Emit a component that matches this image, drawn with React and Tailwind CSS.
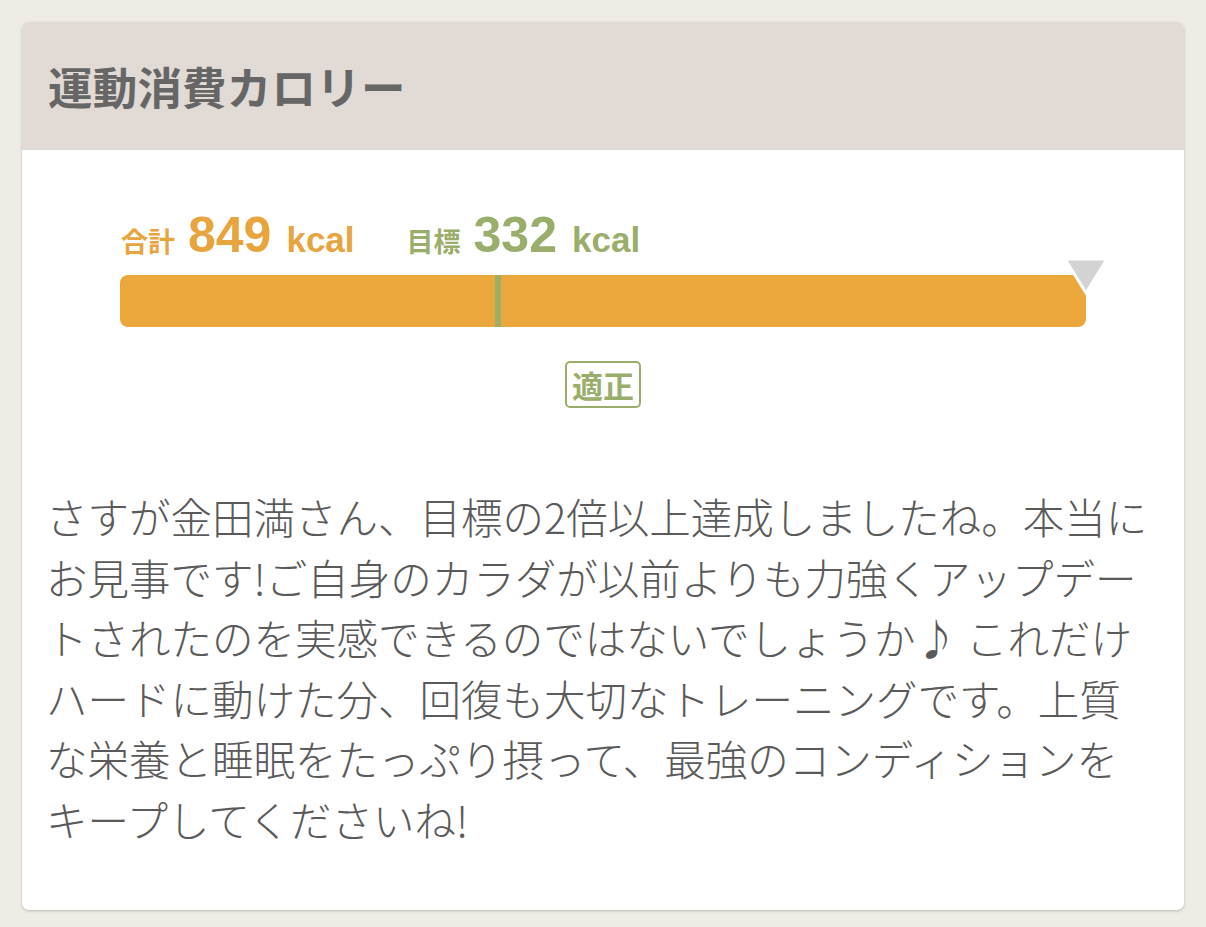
import React from "react";

const jp = { fontFamily: '"Noto Sans CJK JP", "Noto Sans", sans-serif' };
const num = { fontFamily: '"Liberation Sans", "Noto Sans CJK JP", sans-serif' };

const lines = [
  "さすが金田満さん、目標の2倍以上達成しましたね。本当に",
  "お見事です!ご自身のカラダが以前よりも力強くアップデー",
  "トされたのを実感できるのではないでしょうか♪ これだけ",
  "ハードに動けた分、回復も大切なトレーニングです。上質",
  "な栄養と睡眠をたっぷり摂って、最強のコンディションを",
  "キープしてくださいね!",
];

function CalorieBar({ total, goal }) {
  const pct = (goal / total) * 100;
  return (
    <div className="relative h-[52px] w-full rounded-[8px] bg-[#eaa73b]">
      <div
        className="absolute top-0 h-full w-[6px] bg-[#9caf6a]"
        style={{ left: `calc(${pct}% - 3px)` }}
      />
      {/* end-of-range marker */}
      <svg
        className="absolute right-[-24px] top-[-18px]"
        width="48"
        height="40"
        viewBox="0 0 48 40"
      >
        <polygon
          points="3,2 45,2 24,36"
          fill="#d3d3d3"
          stroke="#ffffff"
          strokeWidth="3"
          strokeLinejoin="miter"
        />
      </svg>
    </div>
  );
}

export default function App() {
  return (
    <div className="min-h-[927px] w-full bg-[#efece6] p-[22px]" style={jp}>
      <div className="w-[1162px] overflow-hidden rounded-[7px] bg-white shadow-[0_1px_3px_rgba(0,0,0,0.22)]">
        <div className="flex h-[128px] items-center bg-[#e1dad5] pl-[26px]">
          <h1 className="text-[44.5px] font-bold leading-none tracking-[0.2px] text-[#666666]">
            運動消費カロリー
          </h1>
        </div>

        <div className="px-[98px] pt-[60px]">
          <div className="flex items-baseline pl-[1px] font-bold leading-none">
            <span className="text-[27px] text-[#e8a43d]">合計</span>
            <span className="ml-[13px] text-[50px] text-[#e8a43d]" style={num}>
              849
            </span>
            <span className="ml-[15px] text-[35px] text-[#e8a43d]" style={num}>
              kcal
            </span>
            <span className="ml-[52px] text-[27px] text-[#9aae6c]">目標</span>
            <span className="ml-[13px] text-[50px] text-[#9aae6c]" style={num}>
              332
            </span>
            <span className="ml-[15px] text-[35px] text-[#9aae6c]" style={num}>
              kcal
            </span>
          </div>

          <div className="mt-[15px]">
            <CalorieBar total={849} goal={332} />
          </div>

          <div className="mt-[34px] flex justify-center">
            <span className="rounded-[5px] border-2 border-[#9aae6c] px-[5px] py-[4px] text-[31px] font-bold leading-[35px] text-[#9aae6c]">
              適正
            </span>
          </div>
        </div>

        <div className="px-[24px] pb-[61px] pt-[78px] text-[41.5px] font-light leading-[60.5px] text-[#5a5a5a]">
          {lines.map((l) => (
            <div key={l} className="whitespace-nowrap">
              {l}
            </div>
          ))}
        </div>
      </div>
    </div>
  );
}
